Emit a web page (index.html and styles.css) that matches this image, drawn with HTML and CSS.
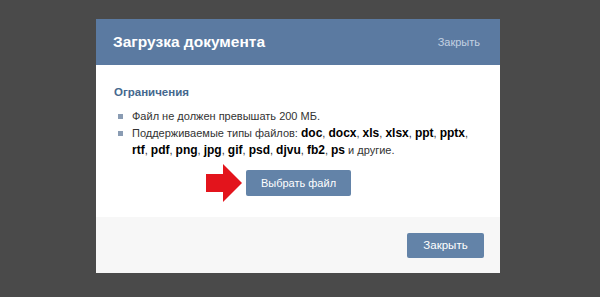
FILE: index.html
```html
<!DOCTYPE html>
<html lang="ru">
<head>
    <meta charset="UTF-8">
    <title>Загрузка документа</title>
    <link rel="stylesheet" href="styles.css">
</head>
<body>
    <div class="box">
        <div class="box-header">
            <div class="box-title">Загрузка документа</div>
            <a class="box-close" href="#">Закрыть</a>
        </div>
        <div class="box-body">
            <div class="info-title">Ограничения</div>
            <ul class="rules">
                <li>Файл не должен превышать 200 МБ.</li>
                <li>Поддерживаемые типы файлов: <b>doc</b>, <b>docx</b>, <b>xls</b>, <b>xlsx</b>, <b>ppt</b>, <b>pptx</b>, <b>rtf</b>, <b>pdf</b>, <b>png</b>, <b>jpg</b>, <b>gif</b>, <b>psd</b>, <b>djvu</b>, <b>fb2</b>, <b>ps</b> и другие.</li>
            </ul>
            <div class="upload-row">
                <svg class="arrow" width="36" height="38" viewBox="0 0 36 38">
                    <polygon points="0,10 17,10 17,0 36,19 17,38 17,28 0,28" fill="#e3141c"/>
                </svg>
                <button class="btn">Выбрать файл</button>
            </div>
        </div>
        <div class="box-footer">
            <button class="btn">Закрыть</button>
        </div>
    </div>
</body>
</html>
```

FILE: styles.css
```css
body, html {
    margin: 0;
    padding: 0;
    background: #4a4a4a;
    font-family: 'Liberation Sans', Arial, sans-serif;
    font-size: 11px;
}

.box {
    width: 404px;
    margin: 19px 0 0 96px;
    background: #fff;
}

.box-header {
    height: 46px;
    background: #5b7aa1;
    display: flex;
    align-items: center;
    justify-content: space-between;
    padding: 0 20px 0 17px;
}

.box-title {
    color: #fff;
    font-weight: bold;
    font-size: 15.5px;
}

.box-close {
    color: #c3d1e2;
    text-decoration: none;
    font-size: 11px;
}

.box-body {
    height: 152px;
    box-sizing: border-box;
    padding: 21px 18px 0 18px;
}

.info-title {
    color: #45688e;
    font-weight: bold;
    font-size: 11.5px;
}

.rules {
    list-style: none;
    margin: 10px 0 0 0;
    padding: 0 0 0 18px;
    color: #333;
    font-size: 11px;
    line-height: 17px;
}

.rules li {
    position: relative;
}

.rules li::before {
    content: '';
    position: absolute;
    left: -14px;
    top: 6px;
    width: 5px;
    height: 5px;
    background: #8a9cb3;
}

.rules b {
    color: #000;
    font-size: 12px;
    line-height: 17px;
}

.upload-row {
    display: flex;
    align-items: center;
    margin: 5px 0 0 92px;
    gap: 4px;
}

.btn {
    background: #6383a8;
    color: #fff;
    border: none;
    border-radius: 2px;
    font-family: 'Liberation Sans', Arial, sans-serif;
    font-size: 11px;
    height: 26px;
    padding: 0;
    white-space: nowrap;
}

.upload-row .btn {
    width: 105px;
}

.box-footer {
    height: 56px;
    background: #f7f7f7;
    display: flex;
    align-items: center;
    justify-content: flex-end;
    padding: 0 16px;
}

.box-footer .btn {
    width: 77px;
    height: 25px;
    font-size: 11.5px;
}
```
